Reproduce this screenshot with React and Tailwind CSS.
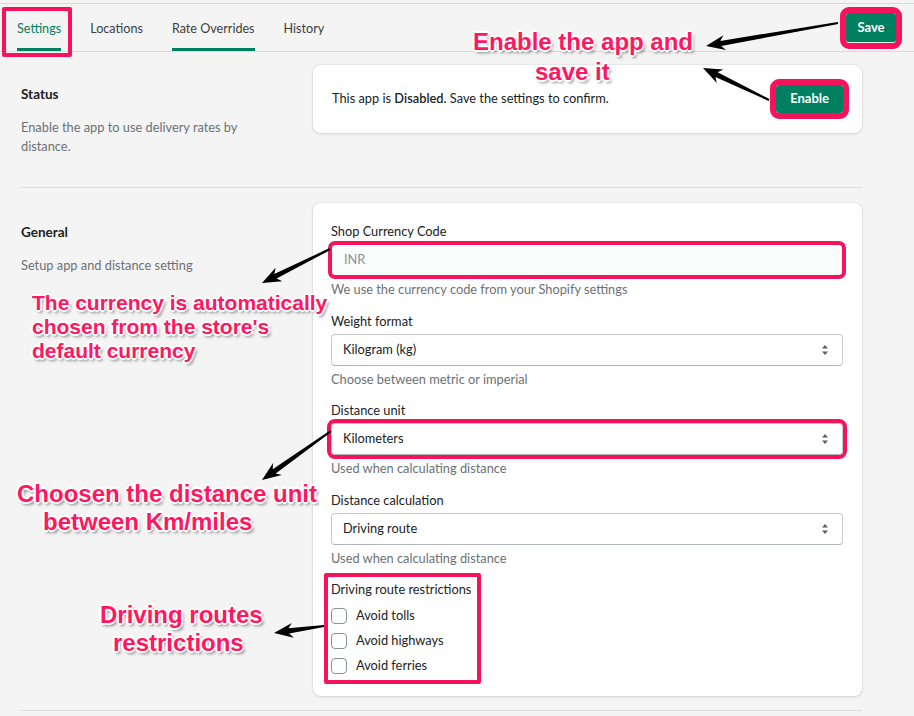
import React from "react"

const annot =
  "absolute font-['Liberation_Sans',Arial,sans-serif] font-bold text-[#ff1760] whitespace-nowrap [text-shadow:-1px_-1px_0_#fff,1px_-1px_0_#fff,-1px_1px_0_#fff,1px_1px_0_#fff,0_-2px_0_#fff,0_2px_0_#fff,-2px_0_0_#fff,2px_0_0_#fff,2px_3px_3px_rgba(0,0,0,0.45)]"

function arrowPoints(x1, y1, x2, y2) {
  const dx = x2 - x1
  const dy = y2 - y1
  const len = Math.hypot(dx, dy)
  const ux = dx / len
  const uy = dy / len
  const nx = -uy
  const ny = ux
  const head = 19
  const hw = 7.5
  const tw = 1
  const sw = 2.6
  const bx = x2 - ux * head
  const by = y2 - uy * head
  const nbx = x2 - ux * (head - 4)
  const nby = y2 - uy * (head - 4)
  const p = [
    [x1 + nx * tw, y1 + ny * tw],
    [nbx + nx * sw, nby + ny * sw],
    [bx + nx * hw, by + ny * hw],
    [x2, y2],
    [bx - nx * hw, by - ny * hw],
    [nbx - nx * sw, nby - ny * sw],
    [x1 - nx * tw, y1 - ny * tw],
  ]
  return p.map(([a, b]) => `${a.toFixed(1)},${b.toFixed(1)}`).join(" ")
}

const arrows = [
  [838, 23, 706, 46],
  [769, 100, 703, 68],
  [330, 249, 262, 283],
  [331, 431, 262, 480],
  [324, 626, 274, 633],
]

function SelectArrows() {
  return (
    <svg width="8" height="12" viewBox="0 0 8 12" className="shrink-0">
      <path d="M4 1 L7 4.6 L1 4.6 Z" fill="#5c5f62" />
      <path d="M1 7.4 L7 7.4 L4 11 Z" fill="#5c5f62" />
    </svg>
  )
}

function Select({ value, outline }) {
  return (
    <div
      className={
        "h-[32px] bg-white rounded-[4px] border border-[#c9cccf] border-b-[#aeb4b9] flex items-center justify-between pl-[11px] pr-[13px] text-[#202223] " +
        (outline ? "outline-4 outline-[#f5145c] outline-offset-[0px]" : "")
      }
    >
      <span>{value}</span>
      <SelectArrows />
    </div>
  )
}

function Field({ label, help, children }) {
  return (
    <div>
      <div className="leading-[20px] mb-[3px] text-[#202223]">{label}</div>
      {children}
      <div className="mt-[3px] leading-[20px] text-[#6d7175]">{help}</div>
    </div>
  )
}

function Checkbox({ label }) {
  return (
    <div className="h-[25px] flex items-center gap-[9px]">
      <span className="w-[16px] h-[16px] rounded-[4px] border border-[#8c9196] bg-white" />
      <span className="text-[#202223]">{label}</span>
    </div>
  )
}

export default function App() {
  return (
    <div className="relative w-[914px] h-[716px] overflow-hidden bg-[#f4f4f4] font-['Lato',sans-serif] text-[12.8px] text-[#202223] pt-[3px]">
      {/* tabs */}
      <div className="h-[49px] border-t border-b border-[#d9d9d9] flex items-stretch pl-[17px] pr-[18px]">
        <div className="flex gap-[29px] text-[12.6px]">
          <div className="relative flex items-center pt-[6px] border-b-[3px] border-[#008060] text-[#008060]">
            Settings
            <div className="absolute -left-[15px] -right-[11px] top-[3px] -bottom-[9px] border-4 border-[#f5145c] rounded-[2px]" />
          </div>
          <div className="flex items-center pt-[6px] border-b-[3px] border-transparent text-[#3d3f41]">Locations</div>
          <div className="flex items-center pt-[6px] border-b-[3px] border-[#008060] text-[#3d3f41]">Rate Overrides</div>
          <div className="flex items-center pt-[6px] border-b-[3px] border-transparent text-[#3d3f41]">History</div>
        </div>
        <div className="ml-auto flex items-center pt-[1px]">
          <button className="h-[30px] w-[50px] bg-[#008060] text-white text-[13px] font-bold rounded-[3px] border-b border-[#e3f1ec] outline-[6px] outline-[#f5145c]">
            Save
          </button>
        </div>
      </div>

      <div className="pl-[21px] pr-[52px]">
        {/* status */}
        <div className="h-[135px] pt-[13px] flex items-start">
          <div className="w-[292px] pt-[19px]">
            <div className="font-bold text-[13.5px] leading-[20px]">Status</div>
            <div className="mt-[14px] w-[240px] leading-[19px] text-[#6d7175]">
              Enable the app to use delivery rates by distance.
            </div>
          </div>
          <div className="flex-1 bg-white rounded-[8px] shadow-[0_0_0_1px_rgba(63,63,68,0.05),0_1px_3px_0_rgba(63,63,68,0.15)] px-[19px] py-[20px] flex items-center justify-between">
            <span>
              This app is <b className="font-semibold">Disabled.</b> Save the settings to confirm.
            </span>
            <button className="h-[28px] px-[14px] bg-[#008060] text-white text-[13px] font-bold rounded-[3px] outline-[6px] outline-[#f5145c]">
              Enable
            </button>
          </div>
        </div>

        {/* general */}
        <div className="border-t border-[#dcdcdc] pt-[15px] flex items-start">
          <div className="w-[292px] pt-[19px]">
            <div className="font-bold text-[13.5px] leading-[20px]">General</div>
            <div className="mt-[14px] leading-[19px] text-[#6d7175]">Setup app and distance setting</div>
          </div>
          <div className="flex-1 bg-white rounded-[8px] shadow-[0_0_0_1px_rgba(63,63,68,0.05),0_1px_3px_0_rgba(63,63,68,0.15)] pl-[18px] pr-[19px] pt-[18px] pb-[18px] flex flex-col gap-[11.5px]">
            <Field label="Shop Currency Code" help="We use the currency code from your Shopify settings">
              <div className="h-[32px] rounded-[4px] bg-[#fafbfb] border border-[#d2d5d8] border-b-[#b5babf] flex items-center pl-[12px] text-[#8c9196] outline-4 outline-[#f5145c] outline-offset-[-1px]">
                INR
              </div>
            </Field>
            <Field label="Weight format" help="Choose between metric or imperial">
              <Select value="Kilogram (kg)" />
            </Field>
            <Field label="Distance unit" help="Used when calculating distance">
              <Select value="Kilometers" outline />
            </Field>
            <Field label="Distance calculation" help="Used when calculating distance">
              <Select value="Driving route" />
            </Field>
            <div className="relative self-start">
              <div className="leading-[20px]">Driving route restrictions</div>
              <div className="mt-[4px]">
                <Checkbox label="Avoid tolls" />
                <Checkbox label="Avoid highways" />
                <Checkbox label="Avoid ferries" />
              </div>
              <div className="absolute -left-[7px] -top-[6px] -right-[10px] -bottom-[6px] border-4 border-[#f5145c] rounded-[2px]" />
            </div>
          </div>
        </div>
        <div className="mt-[14px] border-t border-[#dcdcdc]" />
      </div>

      {/* annotations */}
      <svg className="absolute inset-0 pointer-events-none" width="914" height="716">
        {arrows.map((a, i) => (
          <polygon key={i} points={arrowPoints(...a)} fill="#000" />
        ))}
      </svg>

      <div className={annot + " left-[473px] top-[27px] text-[24px] leading-[30px]"}>
        <div>Enable the app and</div>
        <div className="pl-[62px]">save it</div>
      </div>
      <div className={annot + " left-[32px] top-[291px] text-[21px] leading-[24px]"}>
        <div>The currency is automatically</div>
        <div>chosen from the store's</div>
        <div>default currency</div>
      </div>
      <div className={annot + " left-[17px] top-[480px] text-[24px] leading-[28px]"}>
        <div>Choosen the distance unit</div>
        <div className="pl-[26px]">between Km/miles</div>
      </div>
      <div className={annot + " left-[100px] top-[601px] text-[24px] leading-[28px]"}>
        <div>Driving routes</div>
        <div className="pl-[13px]">restrictions</div>
      </div>
    </div>
  )
}
